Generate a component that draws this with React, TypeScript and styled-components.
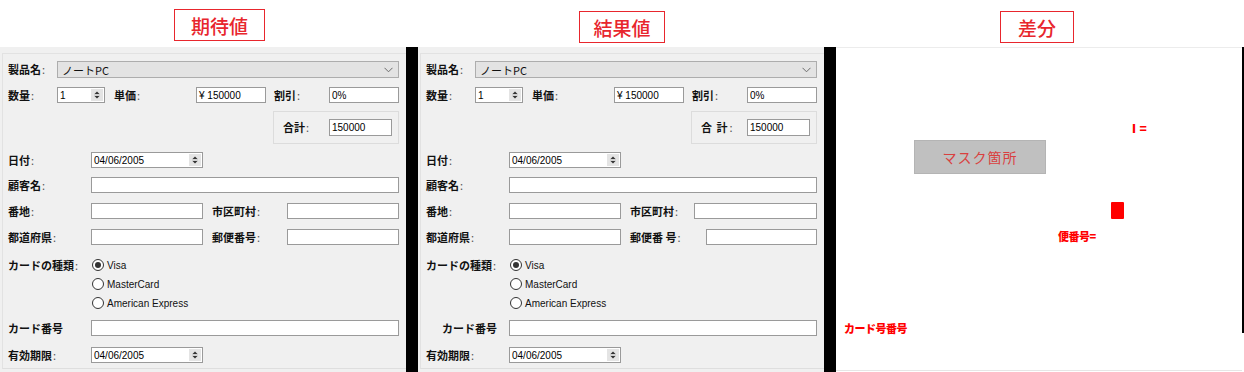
import React from 'react';
import styled, { createGlobalStyle } from 'styled-components';

const GlobalStyle = createGlobalStyle`
  body {
    margin: 0;
    background: #ffffff;
    font-family: "Noto Sans CJK JP", "Noto Sans", sans-serif;
  }
`;

const Page = styled.div`
  width: 1244px;
  height: 372px;
  overflow: hidden;
  display: flex;
  flex-direction: column;
`;

const Header = styled.div`
  display: grid;
  grid-template-columns: 418px 418px 408px;
  height: 47px;
`;

const TitleBox = styled.div<{ $left: number; $top: number; $w: number }>`
  margin: ${(p) => p.$top}px 0 0 ${(p) => p.$left}px;
  width: ${(p) => p.$w}px;
  height: 32px;
  box-sizing: border-box;
  border: 1px solid #e8262d;
  color: #e8262d;
  display: flex;
  align-items: center;
  justify-content: center;
  font-size: 19px;
  font-weight: 500;
  line-height: 1;
`;

const Body = styled.div`
  display: flex;
  height: 325px;
`;

const Divider = styled.div`
  width: 12px;
  background: #000000;
`;

const EdgeStrip = styled.div`
  width: 2px;
  height: 286px;
  background: #000000;
`;

const Panel = styled.div`
  width: 406px;
  height: 325px;
  box-sizing: border-box;
  background: #f0f0f0;
  padding: 6px 0 0 2px;
`;

const Frame = styled.div`
  height: 316px;
  box-sizing: border-box;
  border-top: 1px solid #e2e2e2;
  border-left: 1px solid #e2e2e2;
  border-bottom: 1px solid #dedede;
  padding: 7px 0 0 5px;
`;

const Row = styled.div<{ $h: number; $mt: number }>`
  display: flex;
  align-items: center;
  height: ${(p) => p.$h}px;
  margin-top: ${(p) => p.$mt}px;
`;

const Label = styled.div<{ $w: number; $ml?: number; $pr?: number; $right?: boolean; $spaced?: boolean }>`
  width: ${(p) => p.$w}px;
  margin-left: ${(p) => p.$ml ?? 0}px;
  padding-right: ${(p) => p.$pr ?? 0}px;
  box-sizing: border-box;
  flex-shrink: 0;
  text-align: ${(p) => (p.$right ? 'right' : 'left')};
  font-size: 11px;
  font-weight: 700;
  color: #111111;
  white-space: nowrap;
  line-height: 1;
  letter-spacing: ${(p) => (p.$spaced ? '1px' : '0')};
`;

const Colon = styled.span`
  font-weight: 400;
  color: #555555;
  margin-left: 1px;
`;

const TextBox = styled.div<{ $w: number; $h?: number }>`
  width: ${(p) => p.$w}px;
  height: ${(p) => p.$h ?? 16}px;
  flex-shrink: 0;
  box-sizing: border-box;
  border: 1px solid #9a9a9a;
  background: #ffffff;
  display: flex;
  align-items: center;
  padding-left: 2px;
  font-family: "Liberation Sans", Arial, sans-serif;
  font-size: 10px;
  color: #000000;
`;

const BoxText = styled.span`
  flex: 1;
  white-space: nowrap;
`;

const SpinButtons = styled.div`
  width: 12px;
  height: 12px;
  margin-right: 1px;
  background: #e4e4e4;
  border: 1px solid #e4e4e4;
  box-sizing: border-box;
  display: flex;
  align-items: center;
  justify-content: center;
`;

const Combo = styled.div`
  width: 342px;
  height: 17px;
  box-sizing: border-box;
  background: #e3e3e3;
  border: 1px solid #adadad;
  display: flex;
  align-items: center;
  padding: 0 5px 0 4px;
  font-size: 11px;
  color: #111111;
`;

const GroupBox = styled.div`
  margin-left: 265px;
  width: 126px;
  height: 33px;
  box-sizing: border-box;
  border: 1px solid #dcdcdc;
  display: flex;
  align-items: center;
  padding-left: 9px;
`;

const RadioItem = styled.div<{ $ml: number }>`
  display: flex;
  align-items: center;
  margin-left: ${(p) => p.$ml}px;
  font-family: "Liberation Sans", Arial, sans-serif;
  font-size: 10px;
  color: #111111;
`;

const RadioCircle = styled.span<{ $checked?: boolean }>`
  width: 12px;
  height: 12px;
  box-sizing: border-box;
  border-radius: 50%;
  border: 1px solid #333333;
  background: #ffffff;
  margin-right: 3px;
  display: flex;
  align-items: center;
  justify-content: center;
  &::after {
    content: '';
    display: ${(p) => (p.$checked ? 'block' : 'none')};
    width: 6px;
    height: 6px;
    border-radius: 50%;
    background: #333333;
  }
`;

const DiffPanel = styled.div`
  position: relative;
  width: 406px;
  height: 324px;
  box-sizing: border-box;
  background: #ffffff;
  border-top: 1px solid #ececec;
  border-bottom: 1px solid #e6e6e6;
`;

const MaskBox = styled.div`
  position: absolute;
  left: 78px;
  top: 92px;
  width: 132px;
  height: 34px;
  box-sizing: border-box;
  background: #c0c0c0;
  border: 1px solid #b4b4b4;
  display: flex;
  align-items: center;
  justify-content: center;
  color: #d9403f;
  font-size: 14px;
  letter-spacing: 1px;
`;

const DiffText = styled.span<{ $x: number; $y: number; $size?: number }>`
  position: absolute;
  left: ${(p) => p.$x}px;
  top: ${(p) => p.$y}px;
  font-size: ${(p) => p.$size ?? 11}px;
  font-weight: 900;
  line-height: 1;
  color: #ff0000;
  white-space: nowrap;
  letter-spacing: -0.5px;
`;

const DiffBlock = styled.div`
  position: absolute;
  left: 275px;
  top: 154px;
  width: 13px;
  height: 17px;
  border-radius: 1px;
  background: #ff0000;
`;

function Spin() {
  return (
    <SpinButtons>
      <svg width="8" height="10" viewBox="0 0 8 10">
        <path d="M4 1.5 L6.5 4 L1.5 4 Z" fill="#333" />
        <path d="M1 5 H7" stroke="#bdbdbd" strokeWidth="1" />
        <path d="M1.5 6 L6.5 6 L4 8.5 Z" fill="#333" />
      </svg>
    </SpinButtons>
  );
}

function Chevron() {
  return (
    <svg width="9" height="6" viewBox="0 0 9 6">
      <path d="M0.5 0.8 L4.5 4.8 L8.5 0.8" fill="none" stroke="#6b6b6b" strokeWidth="1" />
    </svg>
  );
}

function L({ children }: { children: React.ReactNode }) {
  return (
    <>
      {children}
      <Colon>:</Colon>
    </>
  );
}

function FormPanel({ result }: { result?: boolean }) {
  return (
    <Panel>
      <Frame>
        <Row $h={17} $mt={0}>
          <Label $w={49}>
            <L>製品名</L>
          </Label>
          <Combo>
            <BoxText>ノートPC</BoxText>
            <Chevron />
          </Combo>
        </Row>
        <Row $h={16} $mt={9}>
          <Label $w={49}>
            <L>数量</L>
          </Label>
          <TextBox $w={48}>
            <BoxText>1</BoxText>
            <Spin />
          </TextBox>
          <Label $w={82} $ml={9}>
            <L>単価</L>
          </Label>
          <TextBox $w={70}>
            <BoxText>¥ 150000</BoxText>
          </TextBox>
          <Label $w={55} $ml={8}>
            <L>割引</L>
          </Label>
          <TextBox $w={70}>
            <BoxText>0%</BoxText>
          </TextBox>
        </Row>
        <Row $h={33} $mt={8}>
          <GroupBox>
            <Label $w={46} $spaced={result}>
              <L>{result ? '合 計' : '合計'}</L>
            </Label>
            <TextBox $w={63} $h={17}>
              <BoxText>150000</BoxText>
            </TextBox>
          </GroupBox>
        </Row>
        <Row $h={16} $mt={8}>
          <Label $w={83}>
            <L>日付</L>
          </Label>
          <TextBox $w={112}>
            <BoxText>04/06/2005</BoxText>
            <Spin />
          </TextBox>
        </Row>
        <Row $h={16} $mt={9}>
          <Label $w={83}>
            <L>顧客名</L>
          </Label>
          <TextBox $w={308} />
        </Row>
        <Row $h={16} $mt={10}>
          <Label $w={83}>
            <L>番地</L>
          </Label>
          <TextBox $w={112} />
          <Label $w={result ? 64 : 75} $ml={9}>
            <L>市区町村</L>
          </Label>
          <TextBox $w={result ? 123 : 112} />
        </Row>
        <Row $h={16} $mt={10}>
          <Label $w={83}>
            <L>都道府県</L>
          </Label>
          <TextBox $w={112} />
          <Label $w={result ? 76 : 75} $ml={9}>
            <L>{result ? '郵便番 号' : '郵便番号'}</L>
          </Label>
          <TextBox $w={result ? 111 : 112} />
        </Row>
        <Row $h={16} $mt={12}>
          <Label $w={83}>
            <L>カードの種類</L>
          </Label>
          <RadioItem $ml={1}>
            <RadioCircle $checked />
            Visa
          </RadioItem>
        </Row>
        <Row $h={16} $mt={3}>
          <RadioItem $ml={84}>
            <RadioCircle />
            MasterCard
          </RadioItem>
        </Row>
        <Row $h={16} $mt={3}>
          <RadioItem $ml={84}>
            <RadioCircle />
            American Express
          </RadioItem>
        </Row>
        <Row $h={16} $mt={9}>
          <Label $w={83} $right={result} $pr={result ? 12 : 0}>
            カード番号
          </Label>
          <TextBox $w={308} />
        </Row>
        <Row $h={16} $mt={11}>
          <Label $w={83}>
            <L>有効期限</L>
          </Label>
          <TextBox $w={112}>
            <BoxText>04/06/2005</BoxText>
            <Spin />
          </TextBox>
        </Row>
      </Frame>
    </Panel>
  );
}

export default function App() {
  return (
    <Page>
      <GlobalStyle />
      <Header>
        <TitleBox $left={174} $top={9} $w={91}>
          期待値
        </TitleBox>
        <TitleBox $left={161} $top={11} $w={86}>
          結果値
        </TitleBox>
        <TitleBox $left={164} $top={11} $w={74}>
          差分
        </TitleBox>
      </Header>
      <Body>
        <FormPanel />
        <Divider />
        <FormPanel result />
        <Divider />
        <DiffPanel>
          <MaskBox>マスク箇所</MaskBox>
          <DiffText $x={292} $y={74} $size={12}>
            Ⅰ=
          </DiffText>
          <DiffBlock />
          <DiffText $x={222} $y={183}>
            便番号=
          </DiffText>
          <DiffText $x={8} $y={275}>
            カード号番号
          </DiffText>
        </DiffPanel>
        <EdgeStrip />
      </Body>
    </Page>
  );
}
